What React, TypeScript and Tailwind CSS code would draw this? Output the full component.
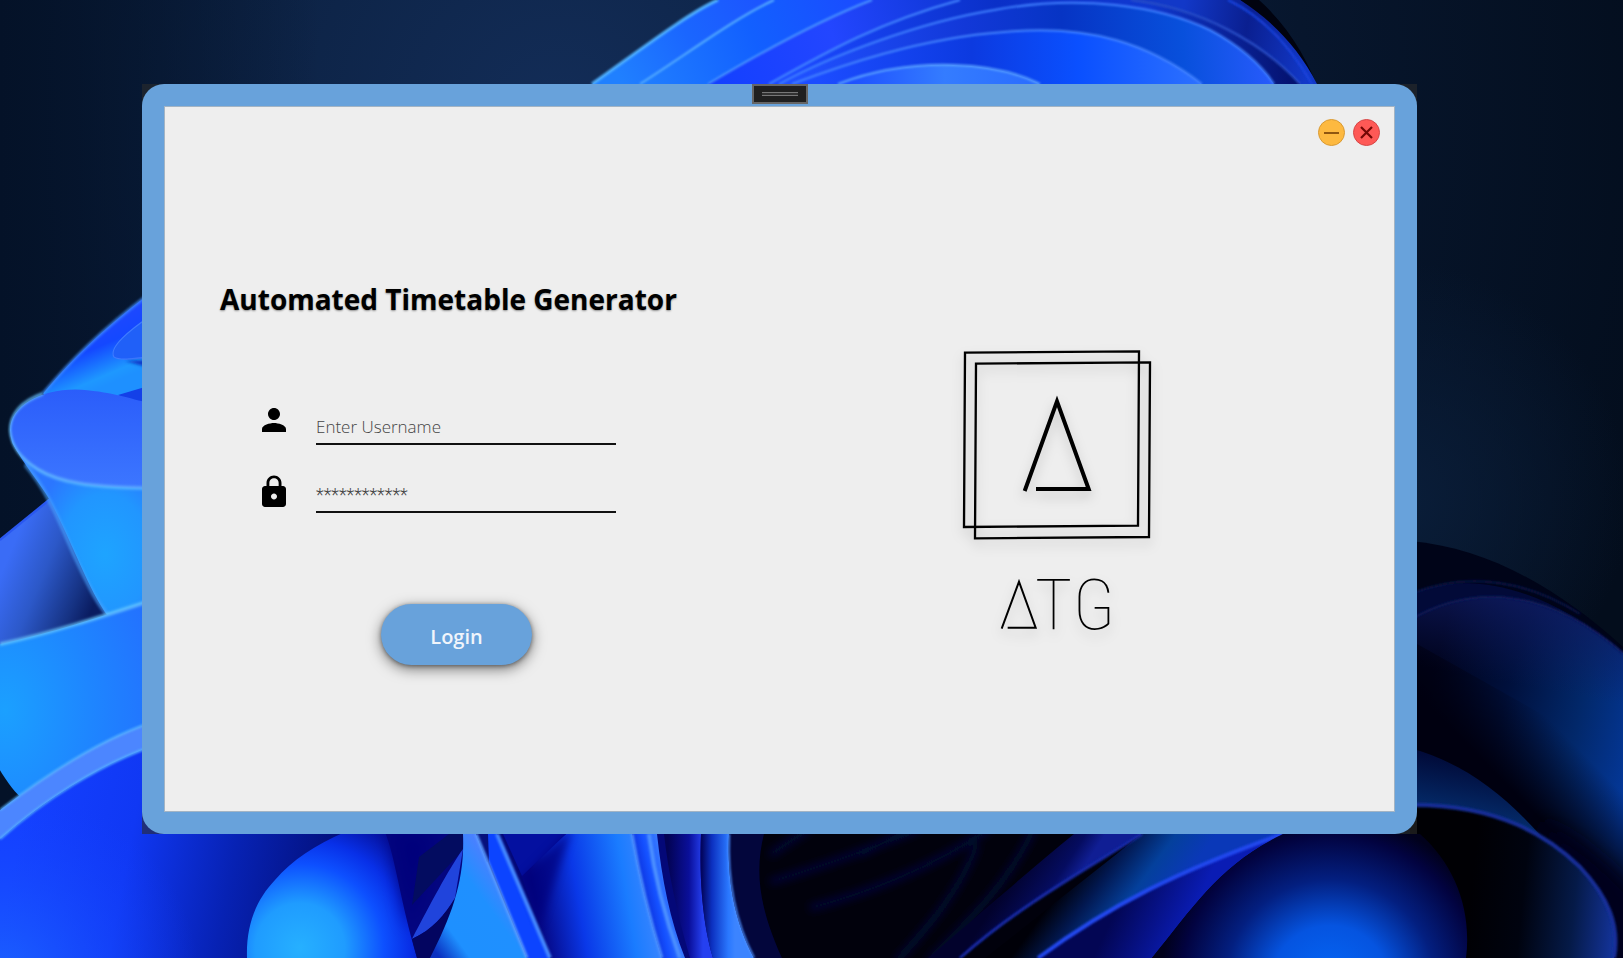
import { MdLock, MdPerson } from "react-icons/md";

type Stops = [number, string][];

function Linear({ id, from, to, stops }: { id: string; from: [number, number]; to: [number, number]; stops: Stops }) {
  return (
    <linearGradient id={id} gradientUnits="userSpaceOnUse" x1={from[0]} y1={from[1]} x2={to[0]} y2={to[1]}>
      {stops.map(([o, c]) => (
        <stop key={o} offset={o} stopColor={c} />
      ))}
    </linearGradient>
  );
}

function Radial({ id, at, r, stops }: { id: string; at: [number, number]; r: number; stops: Stops }) {
  return (
    <radialGradient id={id} gradientUnits="userSpaceOnUse" cx={at[0]} cy={at[1]} r={r}>
      {stops.map(([o, c]) => (
        <stop key={o} offset={o} stopColor={c} />
      ))}
    </radialGradient>
  );
}

function Wallpaper() {
  return (
    <svg
      aria-hidden="true"
      className="absolute inset-0 h-full w-full"
      viewBox="0 0 1623 958"
      preserveAspectRatio="xMidYMid slice"
      fill="none"
    >
      <defs>
        <Radial id="sky" at={[560, 120]} r={1150} stops={[[0, "#132d58"], [0.35, "#0b2040"], [0.65, "#07162d"], [1, "#030d1c"]]} />
        <Linear id="skyL" from={[0, 0]} to={[320, 0]} stops={[[0, "#041228"], [1, "#04122800"]]} />
        <Radial id="skyR" at={[1390, 500]} r={240} stops={[[0, "#0a1e3a"], [1, "#0a1e3a00"]]} />
        <Linear id="t1" from={[620, 80]} to={[760, 0]} stops={[[0, "#2080ff"], [0.5, "#1a66ff"], [1, "#1c55ff"]]} />
        <Linear id="t2" from={[650, 84]} to={[860, 0]} stops={[[0, "#1f7cff"], [0.5, "#1260ff"], [1, "#1a4cff"]]} />
        <Linear id="t3" from={[720, 84]} to={[950, 0]} stops={[[0, "#1440ff"], [0.5, "#2346ff"], [1, "#1038d8"]]} />
        <Linear id="t4" from={[800, 84]} to={[1300, 60]} stops={[[0, "#1b48ff"], [0.4, "#0a30c8"], [0.7, "#1038d0"], [1, "#04106a"]]} />
        <Linear id="t5" from={[800, 84]} to={[1280, 60]} stops={[[0, "#2050ff"], [0.35, "#1238d8"], [0.55, "#0634c4"], [0.8, "#0850dc"], [1, "#2a5cff"]]} />
        <Linear id="t6" from={[820, 70]} to={[1200, 70]} stops={[[0, "#1c4cff"], [0.4, "#0c3ae0"], [0.68, "#0a50ff"], [1, "#2c70ff"]]} />
        <Linear id="t7" from={[850, 84]} to={[1040, 84]} stops={[[0, "#1e50ff"], [0.5, "#347cff"], [1, "#2a6cff"]]} />
        <Linear id="t8" from={[1180, 30]} to={[1310, 50]} stops={[[0, "#1238c8"], [0.5, "#0a1f90"], [1, "#1238c8"]]} />
        <Linear id="l1" from={[85, 305]} to={[100, 352]} stops={[[0, "#1f48ff"], [0.4, "#1448ff"], [0.85, "#1e98ff"], [1, "#1e90ff"]]} />
        <Linear id="l2" from={[80, 350]} to={[80, 425]} stops={[[0, "#2a5cfa"], [1, "#3c76ff"]]} />
        <Radial id="l3" at={[105, 475]} r={75} stops={[[0, "#1ea4ff"], [0.6, "#2196ff"], [1, "#2b76ff"]]} />
        <Linear id="l4" from={[12, 470]} to={[92, 515]} stops={[[0, "#3a6cf6"], [0.4, "#2c58c8"], [0.8, "#163384"], [1, "#0a1c60"]]} />
        <Radial id="l5" at={[5, 590]} r={190} stops={[[0, "#1ba0ff"], [0.45, "#1e86ff"], [1, "#2568ff"]]} />
        <Linear id="l6" from={[20, 830]} to={[330, 890]} stops={[[0, "#1440ff"], [0.35, "#1038f4"], [0.68, "#0722b4"], [1, "#03107c"]]} />
        <Radial id="l7" at={[0, 985]} r={200} stops={[[0, "#1c64ff"], [1, "#1440ff00"]]} />
        <Radial id="b1" at={[300, 948]} r={140} stops={[[0, "#26b0ff"], [0.32, "#1f9cff"], [0.6, "#0d50ff"], [0.78, "#0830e8"], [1, "#0512a0"]]} />
        <Linear id="b2" from={[440, 958]} to={[520, 900]} stops={[[0, "#0a30c0"], [0.25, "#1e90ff"], [0.7, "#1f90ff"], [1, "#4a80ff"]]} />
        <Linear id="b3" from={[535, 900]} to={[655, 880]} stops={[[0, "#050682"], [0.35, "#0a38e8"], [0.75, "#1a7cff"], [1, "#3f86ff"]]} />
        <Linear id="b4" from={[640, 900]} to={[675, 892]} stops={[[0, "#0a26d0"], [0.45, "#1450ff"], [1, "#4388ff"]]} />
        <Linear id="b5" from={[668, 890]} to={[703, 890]} stops={[[0, "#030355"], [0.6, "#0a0f9a"], [1, "#2540f0"]]} />
        <Linear id="b6" from={[702, 890]} to={[735, 890]} stops={[[0, "#030660"], [0.3, "#0c30c0"], [0.8, "#2a78ff"], [1, "#3c84ff"]]} />
        <Linear id="g1" from={[1010, 880]} to={[1056, 910]} stops={[[0, "#02022c"], [0.7, "#050c60"], [1, "#101e94"]]} />
        <Linear id="g2" from={[1075, 870]} to={[1150, 925]} stops={[[0, "#000008"], [0.3, "#021850"], [0.65, "#04409c"], [1, "#0a38b8"]]} />
        <Linear id="g3" from={[1120, 900]} to={[1185, 930]} stops={[[0, "#030654"], [1, "#0a1cb4"]]} />
        <Radial id="g4" at={[1330, 985]} r={170} stops={[[0, "#0468f8"], [0.35, "#0554e0"], [0.62, "#031f80"], [0.88, "#020340"], [1, "#01011c"]]} />
        <Linear id="r1" from={[1430, 690]} to={[1640, 740]} stops={[[0, "#00031c"], [0.35, "#00103c"], [0.7, "#02286a"], [1, "#04389a"]]} />
        <Linear id="r2" from={[1560, 610]} to={[1545, 690]} stops={[[0, "#101c64"], [1, "#101c6400"]]} />
        <Linear id="r3" from={[1480, 830]} to={[1570, 740]} stops={[[0, "#000010"], [0.4, "#000010"], [1, "#00001000"]]} />
        <Linear id="r4" from={[1440, 755]} to={[1430, 808]} stops={[[0, "#010a38"], [1, "#042a68"]]} />
        <Linear id="r5" from={[1470, 900]} to={[1618, 915]} stops={[[0, "#000004"], [0.35, "#00030f"], [0.7, "#051a48"], [1, "#14349c"]]} />
        <filter id="soft" x="-20%" y="-20%" width="140%" height="140%">
          <feGaussianBlur stdDeviation="1" />
        </filter>
        <filter id="mist" x="-20%" y="-20%" width="140%" height="140%">
          <feGaussianBlur stdDeviation="4" />
        </filter>
        <filter id="haze" x="-40%" y="-40%" width="180%" height="180%">
          <feGaussianBlur stdDeviation="9" />
        </filter>
      </defs>

      <rect width="1623" height="958" fill="url(#sky)" />
      <rect width="320" height="958" fill="url(#skyL)" />
      <rect x="1100" y="200" width="523" height="600" fill="url(#skyR)" />

      {/* upper bloom */}
      <path d="M718 0 C690 12 640 50 592 84 L1323 100 C1308 60 1290 28 1259 0 Z" fill="#01030f" />
      <path d="M718 0 C690 12 640 50 592 84 L800 100 L900 0 Z" fill="url(#t1)" />
      <path d="M774 0 C735 18 690 52 640 84 L900 100 L950 0 Z" fill="url(#t2)" />
      <path d="M872 0 C820 20 765 50 708 84 L1000 100 L1228 0 Z" fill="url(#t3)" />
      <path d="M960 0 C880 22 830 50 769 84 L1315 100 C1300 56 1272 24 1240 0 Z" fill="url(#t4)" />
      <path d="M1131 0 C1200 8 1262 42 1300 84 L1317 84 C1300 50 1272 20 1240 0 Z" fill="url(#t8)" />
      <path d="M779 84 C830 56 920 22 994 10 C1080 -6 1160 6 1210 30 C1240 46 1262 66 1274 84 V100 H779 Z" fill="url(#t5)" />
      <path d="M792 84 C840 66 920 38 1004 32 C1090 24 1150 44 1202 84 V100 H792 Z" fill="url(#t6)" />
      <path d="M838 84 C880 68 920 64 953 65 C990 66 1020 74 1040 84 V100 H838 Z" fill="url(#t7)" />
      <g filter="url(#soft)" strokeWidth="2">
        <path d="M718 0 C690 12 640 50 592 84" stroke="#50b0ff" strokeWidth="3" />
        <path d="M774 0 C735 18 690 52 640 84" stroke="#58b0ff" />
        <path d="M872 0 C820 20 765 50 708 84" stroke="#4c94ff" />
        <path d="M960 0 C880 22 830 50 769 84" stroke="#4486ff" />
        <path d="M779 84 C830 56 920 22 994 10 C1080 -6 1160 6 1210 30 C1240 46 1262 66 1274 84" stroke="#4080ff" />
        <path d="M792 84 C840 66 920 38 1004 32 C1090 24 1150 44 1202 84" stroke="#4484ff" />
        <path d="M838 84 C880 68 920 64 953 65 C990 66 1020 74 1040 84" stroke="#5ca4ff" />
        <path d="M1131 0 C1200 8 1262 42 1300 84" stroke="#2a50c8" />
        <path d="M1228 0 C1262 16 1290 46 1312 84" stroke="#1a44e0" />
      </g>

      {/* left petals */}
      <g transform="matrix(1 0 0 1.3546 0 -88.65)">
        <path d="M150 282 C100 310 70 332 43 356 L150 390 Z" fill="url(#l1)" />
        <path d="M150 299 C130 309 108 322 114 329 C120 332 136 330 150 329 Z" fill="#2060f8" stroke="#3f7cff" />
        <path d="M125 332 L150 331 V337 Z" fill="#0c38c8" filter="url(#soft)" />
        <path d="M118 357 L150 350 V370 Z" fill="#1440e8" />
        <path d="M0 464 C20 452 35 443 50 434 L118 524 L0 542 Z" fill="url(#l4)" />
        <path d="M0 464 C20 452 35 443 50 434" stroke="#2a58f0" strokeWidth="2" />
        <path d="M12 392 C25 410 40 422 50 435 C75 470 90 505 112 524 L150 515 V420 Z" fill="url(#l3)" />
        <path
          d="M25 408 C50 430 60 452 76 478 C90 500 98 512 110 521"
          stroke="#4aa4ff"
          strokeWidth="4"
          opacity="0.6"
          filter="url(#soft)"
        />
        <path d="M10 383 C10 365 40 353 75 353 C110 354 130 360 150 363 V426 C90 425 60 422 38 412 C20 404 10 394 10 383 Z" fill="url(#l2)" />
        <path d="M43 356 C20 362 10 372 10 383 C11 394 20 404 38 412 C60 422 90 425 150 426" stroke="#66c0ff" strokeWidth="2" filter="url(#soft)" />
        <path d="M0 541 C50 533 100 521 150 509 V610 L22 655 C12 648 5 640 0 634 Z" fill="url(#l5)" />
        <path d="M0 541 C50 533 100 521 150 509" stroke="#6cccff" strokeWidth="2" filter="url(#soft)" />
        <path d="M150 282 C100 310 70 332 43 356" stroke="#4090ff" strokeWidth="2" filter="url(#soft)" />
      </g>
      <path d="M0 810 C50 772 100 740 150 723 V752 C100 765 45 799 0 840 Z" fill="#4c86ff" />
      <path d="M0 839 C45 799 100 765 150 747 L480 820 V958 H0 Z" fill="url(#l6)" />
      <path d="M0 839 C45 799 100 765 150 747 L300 820 V958 H0 Z" fill="url(#l7)" />
      <g filter="url(#soft)" strokeWidth="2" stroke="#58b4ff">
        <path d="M0 810 C50 772 100 740 150 723" />
        <path d="M0 839 C45 799 100 765 150 747" />
      </g>

      {/* lower ribbons */}
      <path d="M340 834 H500 V958 H400 Z" fill="#040680" />
      <path d="M247 958 C246 925 256 900 275 880 C292 860 315 845 345 832 H385 C396 860 400 900 417 958 Z" fill="url(#b1)" />
      <path d="M390 825 C394 850 400 890 412 930 L436 834 Z" fill="#04067c" filter="url(#haze)" />
      <path d="M419 857 L449 834 H463 V850 L412 905 Z" fill="#030c60" />
      <path d="M463 849 C448 870 430 905 412 939 C432 930 445 915 455 898 Z" fill="#2044dc" />
      <path d="M412 939 C432 930 445 915 455 898 L440 958 H417 Z" fill="#030560" />
      <path d="M480 834 H770 V958 H520 Z" fill="#040878" />
      <path d="M463 834 H476 L527 958 H430 C452 915 465 880 463 834 Z" fill="url(#b2)" />
      <path d="M476 834 H488 L492 860 L487 862 Z" fill="#06107c" />
      <path d="M488 834 H497 L550 958 H527 L489 862 Z" fill="#0c44ff" />
      <path d="M566 834 H632 C640 880 650 920 662 958 H552 L520 872 Z" fill="url(#b3)" />
      <path d="M503 834 H566 L522 876 Z" fill="#0410a0" />
      <path d="M572 828 L522 878 L540 925 Z" fill="#04047c" opacity="0.7" filter="url(#mist)" />
      <path d="M632 834 H657 C662 880 670 920 685 958 H662 C650 920 640 880 632 834 Z" fill="url(#b4)" />
      <path d="M664 834 H701 C699 880 703 925 713 958 H690 C676 910 668 870 664 834 Z" fill="url(#b5)" />
      <path d="M701 834 H729 C727 880 734 920 754 958 H713 C703 925 699 880 701 834 Z" fill="url(#b6)" />
      <path d="M729 834 H1430 V958 H754 C734 920 727 880 729 834 Z" fill="#01010c" />
      <path d="M729 834 H764 C755 870 758 905 782 958 H754 C734 920 727 880 729 834 Z" fill="#03063c" />
      <g filter="url(#soft)" strokeWidth="2">
        <path d="M476 834 L527 958" stroke="#5a9cff" strokeWidth="3" />
        <path d="M497 834 L550 958" stroke="#4488ff" strokeWidth="4" />
        <path d="M632 834 C640 880 650 920 662 958" stroke="#4c90ff" strokeWidth="3" />
        <path d="M649 834 C655 880 666 920 680 958" stroke="#4c90ff" strokeWidth="4" />
        <path d="M729 834 C727 880 734 920 754 958" stroke="#4c90ff" strokeWidth="2" />
      </g>
      <g filter="url(#mist)" strokeWidth="6">
        <path d="M770 855 L810 828 M770 882 C810 870 860 854 920 828 M810 908 C860 895 930 870 990 828 M860 854 L914 828" stroke="#06083e" />
        <path d="M896 962 C930 925 960 890 977 845 M928 962 C975 915 1010 880 1034 828" stroke="#04103a" />
      </g>
      <path d="M1074 834 H1142 C1085 870 1020 905 960 958 H928 C990 905 1030 870 1074 834 Z" fill="url(#g1)" />
      <path d="M1142 834 H1283 C1180 870 1110 905 1038 958 H985 Z" fill="url(#g2)" />
      <path d="M1283 834 C1180 870 1110 905 1038 958 H1152 C1195 905 1220 865 1283 834 Z" fill="url(#g3)" />
      <g filter="url(#soft)">
        <path d="M1142 834 C1085 870 1020 905 960 958" stroke="#162aa8" strokeWidth="3" />
        <path d="M1283 834 C1180 870 1110 905 1038 958" stroke="#2448f0" strokeWidth="4" />
      </g>

      {/* right petals */}
      <path d="M1410 541 C1490 548 1560 590 1623 647 V958 H1410 Z" fill="#000418" />
      <path d="M1410 594 C1470 570 1540 585 1623 651 V958 H1410 Z" fill="#020a38" />
      <path d="M1410 620 C1470 585 1545 585 1623 653 V958 H1410 Z" fill="url(#r1)" />
      <path d="M1410 620 C1470 585 1545 585 1623 653 V740 L1410 700 Z" fill="url(#r2)" opacity="0.7" />
      <path d="M1410 640 L1623 760 V958 H1410 Z" fill="url(#r3)" />
      <path d="M1410 748 C1460 762 1500 790 1540 835 L1410 812 Z" fill="url(#r4)" />
      <path d="M1540 820 C1580 840 1610 865 1640 900 V970 H1600 Z" fill="#00041c" filter="url(#haze)" />
      <path d="M1410 805 C1500 804 1550 838 1580 867 C1608 897 1620 925 1614 958 H1410 Z" fill="url(#r5)" />
      <g filter="url(#soft)">
        <path d="M1410 594 C1470 570 1530 582 1580 614" stroke="#0a1648" strokeWidth="2" />
        <path d="M1410 620 C1470 585 1545 585 1623 653" stroke="#0f1c58" strokeWidth="2" />
        <path d="M1410 805 C1500 804 1550 838 1580 867 C1608 897 1620 925 1614 958" stroke="#162f98" strokeWidth="4" />
      </g>
      <path d="M1283 834 C1220 865 1195 905 1152 958 H1466 C1472 910 1455 865 1420 834 Z" fill="url(#g4)" />
    </svg>
  );
}

function Logo() {
  return (
    <svg
      role="img"
      aria-label="ATG"
      viewBox="0 0 720 960"
      className="h-80 w-60 overflow-visible drop-shadow-[0_6px_6px_rgba(0,0,0,0.18)]"
      fill="none"
      stroke="#000"
    >
      <g strokeWidth="7">
        <path d="M75 68 L597 64 L594 587 L72 591 Z" />
        <path d="M108 101 L630 97 L627 621 L105 625 Z" />
      </g>
      <path d="M254 483 L351 214 L446 477 H288" strokeWidth="12" strokeMiterlimit="10" />
      <path d="M185 896 L237 755 L287 893 H203" strokeWidth="6" strokeMiterlimit="10" />
      <g
        fill="#000"
        stroke="none"
        fontSize="212"
        fontWeight="100"
        fontFamily="'Roboto Condensed', 'Noto Sans Condensed', Roboto, sans-serif"
        textAnchor="middle"
      >
        <text x="341" y="896">T</text>
        <text x="462" y="896">G</text>
      </g>
    </svg>
  );
}

export default function App() {
  return (
    <div className="relative isolate flex min-h-screen flex-col overflow-hidden bg-[#04101f] pt-[84px] pr-[206px] pb-[124px] pl-[142px] font-['Open_Sans','Noto_Sans',sans-serif] text-black">
      <div className="absolute inset-0 -z-10">
        <Wallpaper />
      </div>

      <div className="relative flex flex-1 flex-col bg-[#2c2c2c]/60">
        <div className="absolute top-0 left-1/2 flex h-5 w-14 -translate-x-1/2 items-center justify-center border-2 border-[#666] bg-[#202020]">
          <span className="h-1 w-9 border-y border-[#777] bg-[#333]" />
        </div>

        <div className="flex flex-1 rounded-[22px] bg-[#68a2db] p-[22px]">
          <div className="flex flex-1 flex-col border border-[#a3b4c4] bg-[#eeeeee]">
            <header className="flex justify-end gap-2 px-3.5 py-3">
              <button
                type="button"
                aria-label="Minimize"
                className="flex size-[27px] items-center justify-center rounded-full border border-[#d99a33] bg-[#fdb940]"
              >
                <svg viewBox="0 0 27 27" className="size-[27px] shrink-0" stroke="#8f5610" strokeWidth="2">
                  <path d="M6 14 H21" />
                </svg>
              </button>
              <button
                type="button"
                aria-label="Close"
                className="flex size-[27px] items-center justify-center rounded-full border border-[#d64646] bg-[#fe5956]"
              >
                <svg viewBox="0 0 27 27" className="size-[27px] shrink-0" stroke="#730806" strokeWidth="2.2">
                  <path d="M8 8 L19 19 M19 8 L8 19" />
                </svg>
              </button>
            </header>

            <main className="grid flex-1 grid-cols-2 items-start">
              <form className="pt-[121px] pl-[55px]" onSubmit={(e) => e.preventDefault()}>
                <h1 className="text-[28px] leading-10 font-bold whitespace-nowrap text-shadow-[0_1px_2px_rgba(0,0,0,0.4)]">
                  Automated Timetable Generator
                </h1>

                <div className="mt-[83px] flex flex-col gap-[29px] pl-9">
                  <div className="flex h-[43px] gap-6">
                    <label htmlFor="username" aria-label="Username">
                      <MdPerson size={36} />
                    </label>
                    <input
                      id="username"
                      type="text"
                      placeholder="Enter Username"
                      className="h-9 w-[300px] self-end border-b-2 border-[#111] bg-transparent text-[17px] font-light outline-none placeholder:text-[#444]"
                    />
                  </div>
                  <div className="flex h-[39px] gap-6">
                    <label htmlFor="password" aria-label="Password">
                      <MdLock size={36} />
                    </label>
                    <input
                      id="password"
                      type="password"
                      placeholder="************"
                      className="h-9 w-[300px] self-end border-b-2 border-[#111] bg-transparent font-[Roboto,sans-serif] text-lg font-light outline-none placeholder:text-[#444]"
                    />
                  </div>
                </div>

                <button
                  type="submit"
                  className="mt-[91px] ml-[161px] h-[61px] w-[151px] rounded-full bg-[#68a2db] pt-1 text-xl font-semibold text-[#f0f5fb] shadow-[0_4px_14px_rgba(0,0,0,0.5),0_1px_4px_rgba(0,0,0,0.4)]"
                >
                  Login
                </button>
              </form>

              <div className="flex justify-center pt-[172px] pr-[54px]">
                <Logo />
              </div>
            </main>
          </div>
        </div>
      </div>
    </div>
  );
}
